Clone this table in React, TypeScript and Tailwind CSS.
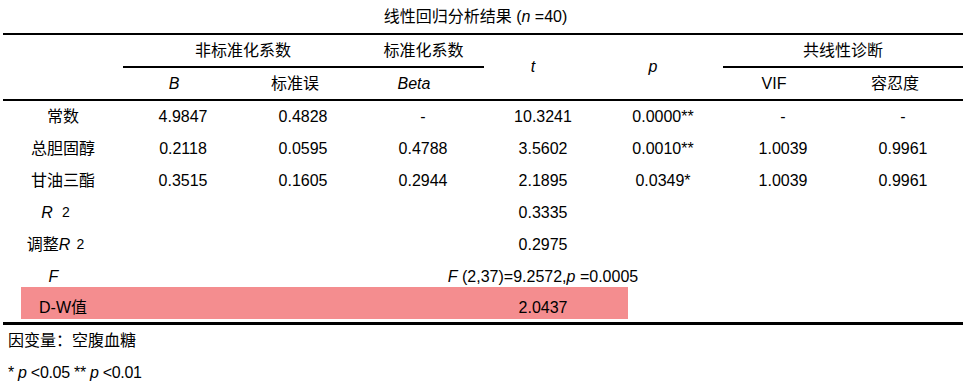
export default function App() {
  const font = { fontFamily: '"Liberation Sans", "Noto Sans CJK SC", sans-serif' };

  const rows = [
    ["常数", "4.9847", "0.4828", "-", "10.3241", "0.0000**", "-", "-"],
    ["总胆固醇", "0.2118", "0.0595", "0.4788", "3.5602", "0.0010**", "1.0039", "0.9961"],
    ["甘油三酯", "0.3515", "0.1605", "0.2944", "2.1895", "0.0349*", "1.0039", "0.9961"],
  ];

  return (
    <div className="w-[963px] h-[385px] bg-white text-black text-[16px] leading-none overflow-hidden" style={font}>
      <div className="ml-[3px] w-[960px]">
        <div className="h-[33px] flex items-center justify-center pr-[15px]">
          线性回归分析结果 (<i>n</i>&nbsp;=40)
        </div>

        <div className="border-t-2 border-b-2 border-black grid grid-cols-[repeat(8,120px)] grid-rows-[33px_31px]">
          <div className="row-span-2" />
          <div className="col-span-2 border-b-2 border-black flex items-center justify-center">非标准化系数</div>
          <div className="border-b-2 border-black flex items-center justify-center w-[121px]">标准化系数</div>
          <div className="row-span-2 flex items-center justify-center pr-[20px]"><i>t</i></div>
          <div className="row-span-2 flex items-center justify-center pr-[20px]"><i>p</i></div>
          <div className="col-span-2 border-b-2 border-black flex items-center justify-center">共线性诊断</div>
          <div className="flex items-center justify-center pr-[18px]"><i>B</i></div>
          <div className="flex items-center justify-center pr-[16px]">标准误</div>
          <div className="flex items-center justify-center pr-[18px]"><i>Beta</i></div>
          <div className="flex items-center justify-center pr-[18px]">VIF</div>
          <div className="flex items-center justify-center pr-[16px]">容忍度</div>
        </div>

        <div className="grid grid-cols-[repeat(8,120px)] auto-rows-[32px]">
          {rows.map((r) =>
            r.map((c, i) => (
              <div key={r[0] + i} className="flex items-center justify-center">{c}</div>
            ))
          )}

          <div className="flex items-center justify-center pr-[15px]">
            <span><i>R</i><span className="relative -top-px ml-[9px] text-[14px]">2</span></span>
          </div>
          <div className="col-span-3" />
          <div className="flex items-center justify-center">0.3335</div>
          <div className="col-span-3" />

          <div className="flex items-center justify-center pr-[15px]">
            <span>调整<i>R</i><span className="relative -top-px ml-[6px] text-[14px]">2</span></span>
          </div>
          <div className="col-span-3" />
          <div className="flex items-center justify-center">0.2975</div>
          <div className="col-span-3" />

          <div className="flex items-center justify-center pr-[19px]"><i>F</i></div>
          <div className="col-span-7 flex items-center justify-center whitespace-nowrap">
            <i>F</i>&nbsp;(2,37)=9.2572,<i>p</i>&nbsp;=0.0005
          </div>
        </div>

        <div className="relative h-[29px] border-b-[3px] border-black box-content grid grid-cols-[repeat(8,120px)]">
          <div className="absolute left-[18px] top-[-6px] w-[607px] h-[32px] bg-[#f48d8f]" />
          <div className="relative flex items-center justify-center">D-W值</div>
          <div className="col-span-3" />
          <div className="relative flex items-center justify-center">2.0437</div>
        </div>
      </div>

      <div className="pl-[8px] h-[32px] flex items-center">因变量：空腹血糖</div>
      <div className="pl-[8px] h-[32px] flex items-center whitespace-pre tracking-[-0.3px]">
        * <i>p</i> &lt;0.05 ** <i>p</i> &lt;0.01
      </div>
    </div>
  );
}
